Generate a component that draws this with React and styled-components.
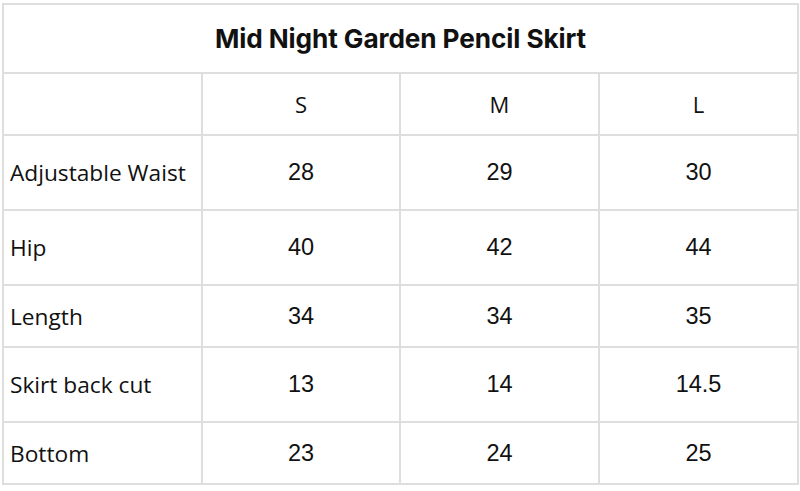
import { Fragment } from "react";
import styled, { createGlobalStyle } from "styled-components";

const GlobalStyle = createGlobalStyle`
  html, body {
    margin: 0;
    padding: 0;
    background: #fff;
  }
`;

const Page = styled.div`
  padding: 3px 0 0 2px;
`;

const Grid = styled.div`
  display: grid;
  grid-template-columns: 197px 196px 197px 197px;
  grid-template-rows: 67px 60px 73px 73px 60px 73px 60px;
  gap: 2px;
  padding: 2px;
  width: max-content;
  background: #dedede;
  color: #111;
`;

const Title = styled.div`
  grid-column: 1 / -1;
  display: flex;
  align-items: center;
  justify-content: center;
  background: #fff;
  font-family: Inter, "Liberation Sans", sans-serif;
  font-weight: 700;
  font-size: 26.2px;
  letter-spacing: -0.1px;
`;

const Cell = styled.div`
  display: flex;
  align-items: center;
  justify-content: ${(p) => (p.$label ? "flex-start" : "center")};
  padding-left: ${(p) => (p.$label ? 6 : 0)}px;
  background: #fff;
  font-family: ${(p) =>
    p.$label ? '"Open Sans", sans-serif' : '"Liberation Sans", Arial, sans-serif'};
  font-size: ${(p) => (p.$label ? 22.7 : 23.5)}px;
`;

const SizeCell = styled(Cell)`
  font-family: "Open Sans", sans-serif;
  font-size: 22px;
`;

const sizes = ["S", "M", "L"];

const rows = [
  { name: "Adjustable Waist", values: ["28", "29", "30"] },
  { name: "Hip", values: ["40", "42", "44"] },
  { name: "Length", values: ["34", "34", "35"] },
  { name: "Skirt back cut", values: ["13", "14", "14.5"] },
  { name: "Bottom", values: ["23", "24", "25"] },
];

export default function App() {
  return (
    <>
      <GlobalStyle />
      <Page>
        <Grid>
          <Title>Mid Night Garden Pencil Skirt</Title>
          <Cell />
          {sizes.map((s) => (
            <SizeCell key={s}>{s}</SizeCell>
          ))}
          {rows.map((r) => (
            <Fragment key={r.name}>
              <Cell $label>{r.name}</Cell>
              {r.values.map((v, i) => (
                <Cell key={i}>{v}</Cell>
              ))}
            </Fragment>
          ))}
        </Grid>
      </Page>
    </>
  );
}
